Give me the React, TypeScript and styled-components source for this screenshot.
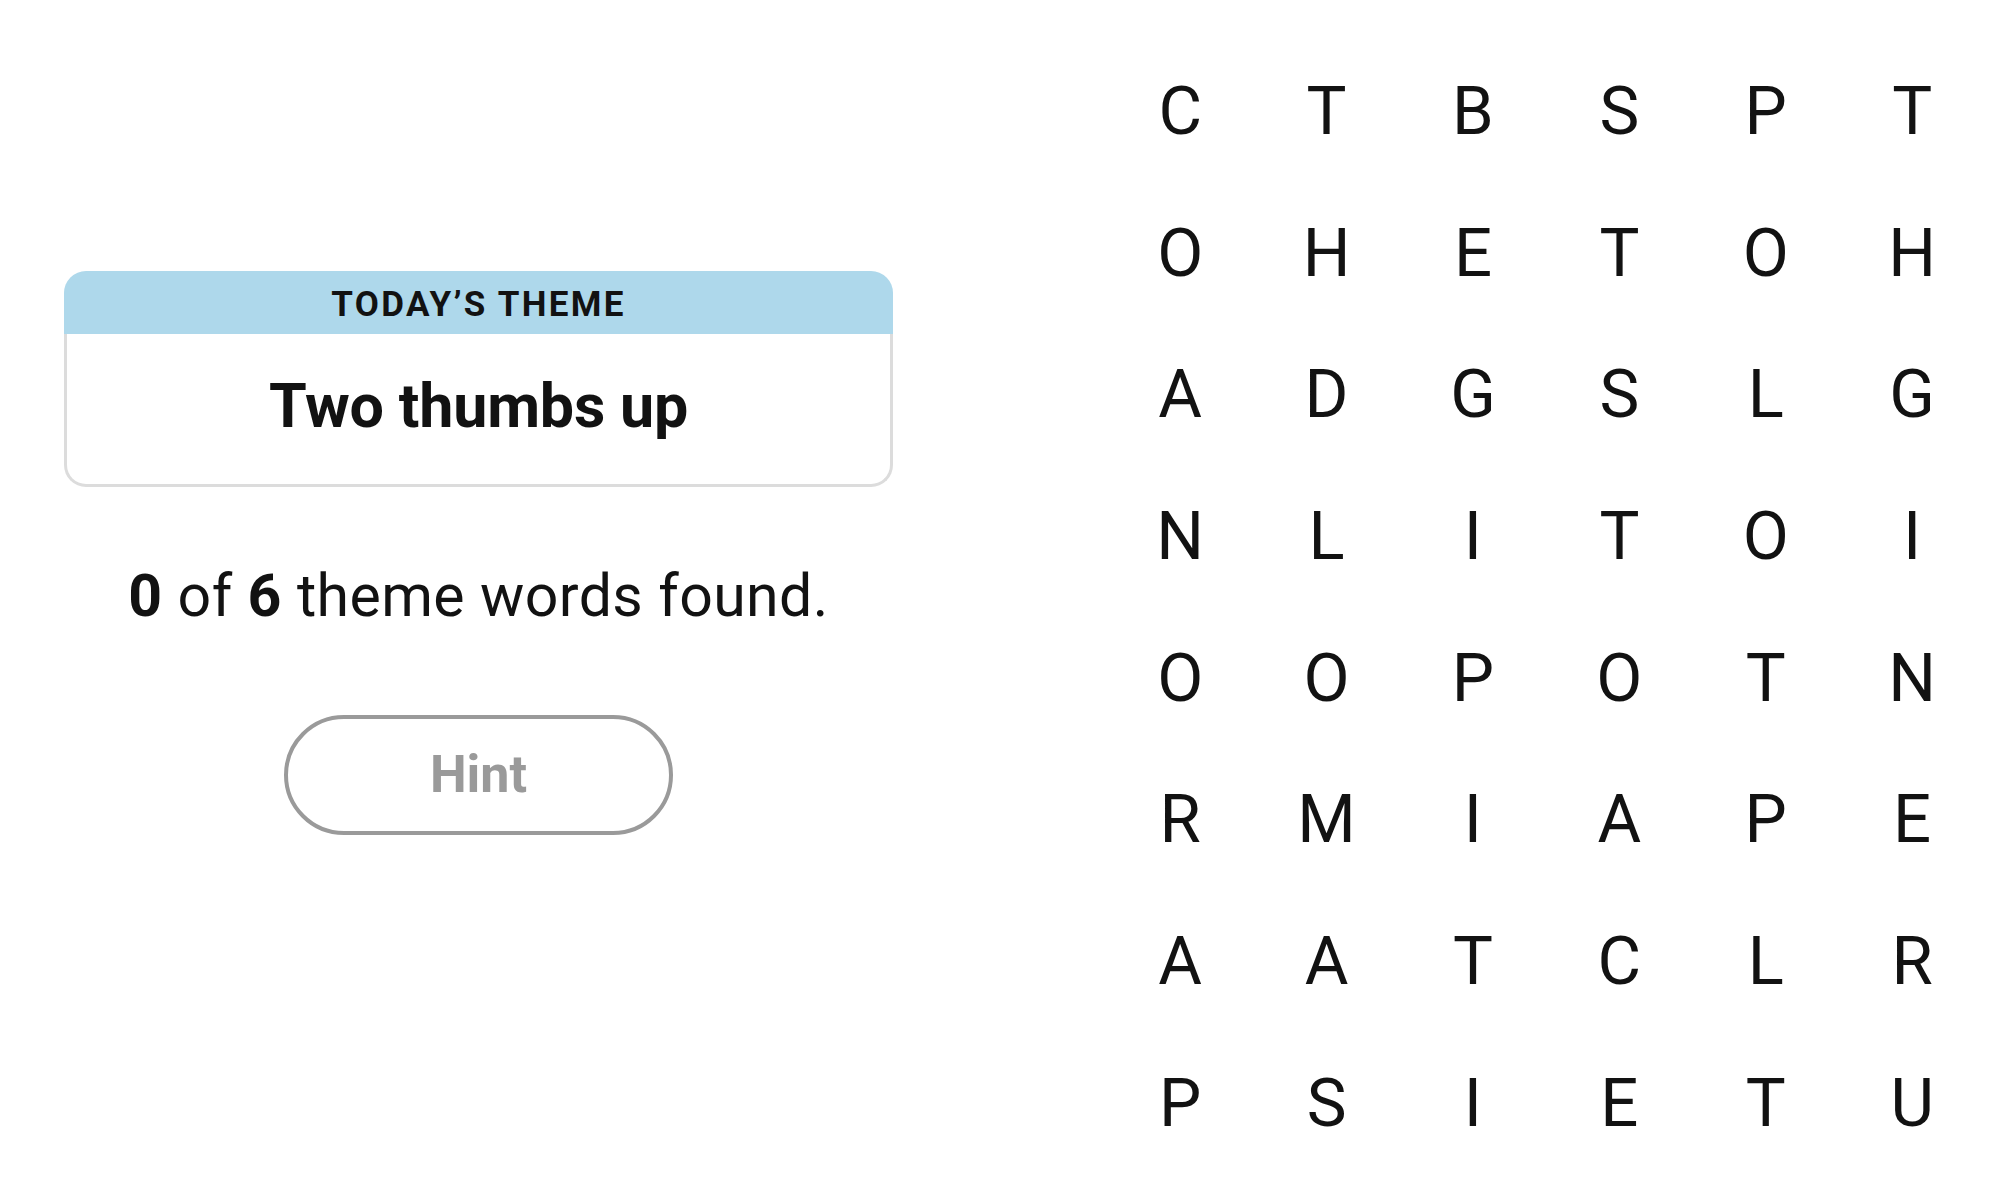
import React from "react";
import styled, { createGlobalStyle } from "styled-components";

const GlobalStyle = createGlobalStyle`
  html, body {
    margin: 0;
    padding: 0;
    background: #ffffff;
  }
  body {
    font-family: Roboto, "Liberation Sans", Arial, sans-serif;
    color: #121212;
  }
`;

const Page = styled.main`
  display: flex;
  flex-direction: row;
  align-items: flex-start;
  width: 2000px;
  height: 1203px;
  overflow: hidden;
`;

const LeftColumn = styled.section`
  width: 957px;
  display: flex;
  flex-direction: column;
  align-items: center;
  padding-top: 271px;
  box-sizing: border-box;
`;

const ThemeCard = styled.div`
  width: 829px;
  display: flex;
  flex-direction: column;
`;

const ThemeHeader = styled.div`
  height: 63px;
  background: #aed8eb;
  border-radius: 22px 22px 0 0;
  display: flex;
  align-items: center;
  justify-content: center;
  padding-top: 3px;
  box-sizing: border-box;
  font-size: 35px;
  font-weight: 700;
  letter-spacing: 2.3px;
  color: #121212;
`;

const ThemeBody = styled.div`
  height: 153px;
  border: 3px solid #dcdcdc;
  border-top: none;
  border-radius: 0 0 22px 22px;
  box-sizing: border-box;
  display: flex;
  align-items: center;
  justify-content: center;
  padding-bottom: 6px;
  font-size: 61px;
  font-weight: 700;
  letter-spacing: -0.2px;
  color: #121212;
`;

const Progress = styled.p`
  margin: 74px 0 0;
  font-size: 59px;
  line-height: 70px;
  font-weight: 400;
  letter-spacing: 0.4px;
  color: #121212;

  b {
    font-weight: 700;
  }
`;

const HintButton = styled.button`
  margin-top: 84px;
  width: 389px;
  height: 120px;
  border: 4px solid #9a9a9a;
  border-radius: 60px;
  background: #ffffff;
  color: #9a9a9a;
  font-family: Roboto, "Liberation Sans", Arial, sans-serif;
  font-size: 52px;
  font-weight: 700;
  display: flex;
  align-items: center;
  justify-content: center;
  padding: 0 0 2px;
  cursor: default;
`;

const LetterGrid = styled.div`
  margin-left: 150px;
  margin-top: 39px;
  display: grid;
  grid-template-columns: repeat(6, 146.4px);
  grid-template-rows: repeat(8, 141.7px);
`;

const Letter = styled.div`
  display: flex;
  align-items: center;
  justify-content: center;
  font-size: 67px;
  font-weight: 400;
  color: #121212;
  line-height: 1;
  padding-top: 3px;
  box-sizing: border-box;
`;

const rows = [
  "CTBSPT",
  "OHETOH",
  "ADGSLG",
  "NLITOI",
  "OOPOTN",
  "RMIAPE",
  "AATCLR",
  "PSIETU",
];

export default function App() {
  return (
    <>
      <GlobalStyle />
      <Page>
        <LeftColumn>
          <ThemeCard>
            <ThemeHeader>TODAY’S THEME</ThemeHeader>
            <ThemeBody>Two thumbs up</ThemeBody>
          </ThemeCard>
          <Progress>
            <b>0</b> of <b>6</b> theme words found.
          </Progress>
          <HintButton type="button">Hint</HintButton>
        </LeftColumn>
        <LetterGrid>
          {rows.map((row, r) =>
            row.split("").map((ch, c) => <Letter key={`${r}-${c}`}>{ch}</Letter>)
          )}
        </LetterGrid>
      </Page>
    </>
  );
}
